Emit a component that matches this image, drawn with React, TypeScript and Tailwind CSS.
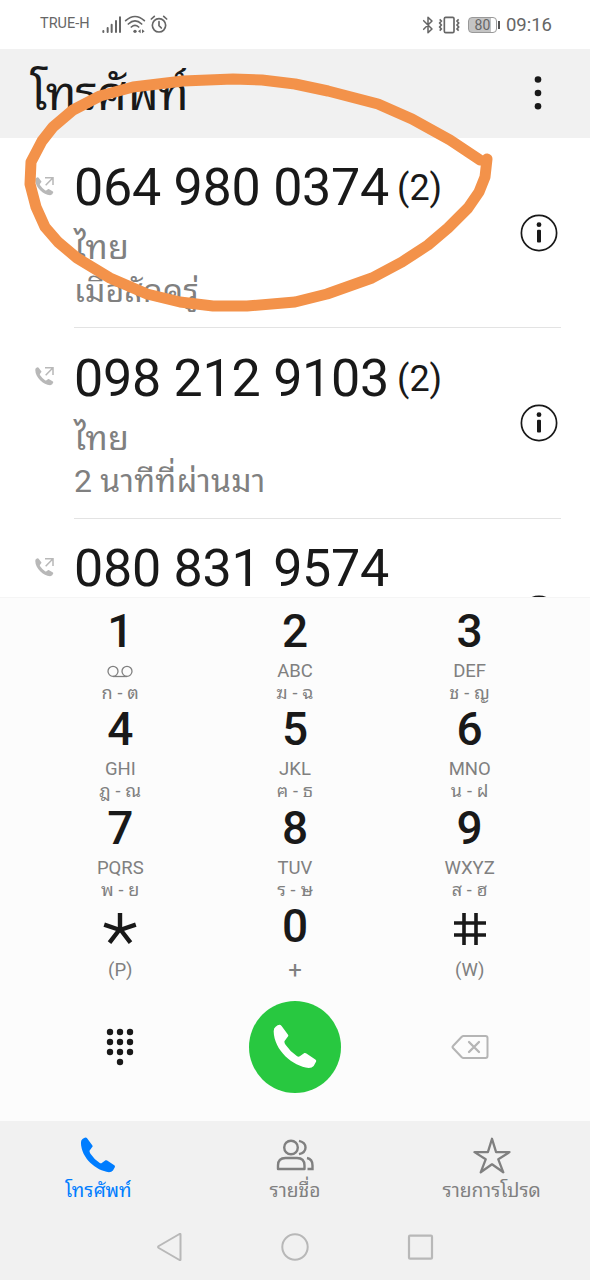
import type { ReactNode } from "react";

interface Call {
  number: string;
  count?: number;
  place?: string;
  time?: string;
}

interface DialKey {
  key: ReactNode;
  latin: ReactNode;
  thai?: string;
}

const calls: Call[] = [
  { number: "064 980 0374", count: 2, place: "ไทย", time: "เมื่อสักครู่" },
  { number: "098 212 9103", count: 2, place: "ไทย", time: "2 นาทีที่ผ่านมา" },
  { number: "080 831 9574" },
];

const HANDSET =
  "M14 4Q21-1 26 6L46 33Q47 36 44 39L35 51Q33 55 38 63Q52 84 72 97Q77 101 82 97L95 88Q98 87 101 89L128 107Q132 110 130 114L123 127Q118 133 108 133C60 128 3 80 2 22Q2 12 8 8Z";

function Handset({ className }: { className: string }) {
  return (
    <svg viewBox="0 0 133 136" className={className} fill="currentColor">
      <path d={HANDSET} />
    </svg>
  );
}

function StatusBar() {
  return (
    <div className="flex h-[49px] items-center justify-between pl-[40px] pr-[38px] text-[#666]">
      <div className="flex items-center">
        <span className="w-[62px] text-[14.5px] leading-[20px] pb-[2px]">TRUE-H</span>
        <svg width="20" height="19" viewBox="0 0 60 57" stroke="currentColor" strokeWidth="6" strokeLinecap="round">
          <path d="M4 51v-3M17 51V39M29 51V29M42 51V18M54 51V7" />
        </svg>
        <svg width="22" height="19" viewBox="0 0 66 57" className="ml-[2px]" fill="none" stroke="currentColor" strokeWidth="5" strokeLinecap="round">
          <path d="M5 17Q33-8 61 17M13 27Q33 8 53 27M22 36Q33 26 44 36" />
          <circle cx="33" cy="49" r="5" fill="currentColor" stroke="none" />
          <path d="M50 43v12l-8-6zM54 43v12l8-6z" fill="currentColor" stroke="none" />
        </svg>
        <svg width="18" height="19" viewBox="0 0 54 57" className="ml-[4px]" fill="none" stroke="currentColor" strokeWidth="5" strokeLinecap="round">
          <circle cx="27" cy="31" r="20" />
          <path d="M27 20v12l7 7M4 12l9-8M50 12l-9-8" />
        </svg>
      </div>
      <div className="flex items-center">
        <svg width="12" height="18" viewBox="0 0 36 54" fill="none" stroke="currentColor" strokeWidth="4.5" strokeLinejoin="round" strokeLinecap="round">
          <path d="M5 14l25 25-12 11V4l12 11L5 40" />
        </svg>
        <svg width="23" height="18" viewBox="0 0 69 54" className="ml-[4px]" fill="none" stroke="currentColor" strokeWidth="5">
          <rect x="19" y="4" width="29" height="46" rx="4" strokeWidth="5" />
          <path d="M5 10l5 5-5 6 5 6-5 6 5 6-5 5M62 10l-5 5 5 6-5 6 5 6-5 6 5 5" />
        </svg>
        <div className="ml-[7px] flex h-[16px] w-[29px] items-center justify-center rounded-[4px] border border-[#999] bg-[linear-gradient(90deg,#c4c4c4_80%,#fff_80%)] text-[14px] leading-none">
          80
        </div>
        <div className="ml-[1px] h-[8px] w-[2px] bg-[#555]" />
        <span className="ml-[6px] text-[18.5px] leading-[24px] pt-[1px]">09:16</span>
      </div>
    </div>
  );
}

function CallRow({ call }: { call: Call }) {
  return (
    <div className="flex h-[190.5px] shrink-0 pl-[34px] pr-[29px]">
      <svg width="21" height="20" viewBox="0 0 63 60" className="mt-[38px] text-[#b8b8b8]">
        <path d={HANDSET} fill="currentColor" transform="translate(3 3) scale(.42 .41)" />
        <path d="M33 5h24v22M57 5L35 28" fill="none" stroke="currentColor" strokeWidth="4.5" />
      </svg>
      <div className="ml-[19px] flex flex-1 justify-between border-b border-[#e3e3e3]">
        <div className="pt-[20.5px]">
          <div className="flex h-[60px] text-[52px] leading-[60px] text-[#191919]">
            <span className="whitespace-nowrap tracking-[-0.25px]">{call.number}</span>
            {call.count && <span className="ml-[8px] text-[36px] leading-[60px]">({call.count})</span>}
          </div>
          <div className="mt-[8px] text-[32px] leading-[43.5px] tracking-[0.2px] text-[#808080]">
            <div className="text-[34px]">{call.place}</div>
            <div>{call.time}</div>
          </div>
        </div>
        <svg width="38" height="38" viewBox="0 0 38 38" className="mr-[3px] mt-[76.4px]">
          <circle cx="19" cy="19" r="17.6" fill="none" stroke="#191919" strokeWidth="1.7" />
          <circle cx="19" cy="10.7" r="2.4" fill="#191919" />
          <rect x="17" y="15.8" width="4" height="12.6" rx="1" fill="#191919" />
        </svg>
      </div>
    </div>
  );
}

const keys: DialKey[] = [
  {
    key: "1",
    latin: (
      <svg width="26" height="13" viewBox="0 0 26 13" fill="none" stroke="currentColor" strokeWidth="1.3">
        <circle cx="6" cy="6.3" r="5" />
        <circle cx="20" cy="6.3" r="5" />
        <path d="M6 11.5h14" />
      </svg>
    ),
    thai: "ก - ต",
  },
  { key: "2", latin: "ABC", thai: "ฆ - ฉ" },
  { key: "3", latin: "DEF", thai: "ช - ญ" },
  { key: "4", latin: "GHI", thai: "ฎ - ณ" },
  { key: "5", latin: "JKL", thai: "ฅ - ธ" },
  { key: "6", latin: "MNO", thai: "น - ฝ" },
  { key: "7", latin: "PQRS", thai: "พ - ย" },
  { key: "8", latin: "TUV", thai: "ร - ษ" },
  { key: "9", latin: "WXYZ", thai: "ส - ฮ" },
  {
    key: (
      <svg width="34" height="34" viewBox="0 0 34 34" className="mt-[5px]" stroke="currentColor" strokeWidth="4.4">
        <path d="M17 1v17M1.2 12.6L17 18M32.8 12.6L17 18M6.5 30.7L17 17M27.5 30.7L17 17" />
      </svg>
    ),
    latin: "(P)",
  },
  { key: "0", latin: <span className="text-[24px]">+</span> },
  {
    key: (
      <svg width="32" height="34" viewBox="0 0 32 34" className="mt-[5px]" stroke="currentColor" strokeWidth="3.6">
        <path d="M10 1v32M22 1v32M0 11h32M0 23h32" />
      </svg>
    ),
    latin: "(W)",
  },
];

function Keypad() {
  return (
    <div className="grid grid-cols-3 px-[33px]">
      {keys.map((k, i) => (
        <div key={i} className="flex h-[98.4px] flex-col items-center">
          <div className="flex h-[48px] items-center text-[46px] font-medium leading-[48px] text-[#191919]">
            {k.key}
          </div>
          <div
            className={
              k.thai
                ? "mt-[5px] flex h-[22px] items-center text-[18.5px] leading-[22px] text-[#808080]"
                : "mt-[8.5px] flex h-[22px] items-center text-[18.5px] leading-[22px] text-[#808080]"
            }
          >
            {k.latin}
          </div>
          {k.thai && <div className="text-[18px] leading-[22px] tracking-[0.2px] text-[#808080]">{k.thai}</div>}
        </div>
      ))}
    </div>
  );
}

const dots = [0, 1, 2, 3, 4, 5, 6, 7, 8, 10];

function DialActions() {
  return (
    <div className="grid grid-cols-3 items-center justify-items-center px-[33px]">
      <svg width="28" height="38" viewBox="0 0 28 38" fill="#191919">
        {dots.map((d) => (
          <circle key={d} cx={4 + (d % 3) * 10} cy={4 + Math.floor(d / 3) * 10} r="3.2" />
        ))}
      </svg>
      <div className="flex h-[92px] w-[92px] items-center justify-center rounded-full bg-[#28c840]">
        <Handset className="h-[45px] w-[44px] text-white" />
      </div>
      <svg width="38" height="26" viewBox="0 0 38 26" className="ml-[1px]" fill="none" stroke="#b5b5b5" strokeWidth="2" strokeLinejoin="round" strokeLinecap="round">
        <path d="M12.5 2h22q2 0 2 2v18q0 2-2 2h-22q-1 0-2-1l-8.5-9q-1-1 0-2l8.5-9q1-1 2-1z" />
        <path d="M18 8l10 10M28 8L18 18" strokeWidth="2.3" />
      </svg>
    </div>
  );
}

function Tab({ icon, label, active }: { icon: ReactNode; label: string; active?: boolean }) {
  return (
    <div className={active ? "flex flex-col items-center text-[#007dff]" : "flex flex-col items-center text-[#808080]"}>
      <div className="flex h-[38px] items-center">{icon}</div>
      <div className="mt-[3px] whitespace-nowrap text-[19.2px] leading-[28px]">{label}</div>
    </div>
  );
}

function BottomTabs() {
  return (
    <div className="grid h-[93px] grid-cols-3 pt-[15px]">
      <Tab active label="โทรศัพท์" icon={<Handset className="h-[36px] w-[36px]" />} />
      <Tab
        label="รายชื่อ"
        icon={
          <svg width="38" height="32" viewBox="0 0 38 32" fill="none" stroke="currentColor" strokeWidth="2.4">
            <circle cx="15" cy="8.5" r="6.8" />
            <path d="M2 30v-3.5q0-7.5 7.5-7.5h11.5q7.5 0 7.5 7.5V30z" strokeLinejoin="round" />
            <path d="M23 1.8q6.5 1.5 6.5 6.7t-6.5 6.7M31 19q5.5 1 5.5 7.5V30h-5" />
          </svg>
        }
      />
      <Tab
        label="รายการโปรด"
        icon={
          <svg width="38" height="37" viewBox="0 0 38 37" fill="none" stroke="currentColor" strokeWidth="2.3" strokeLinejoin="round">
            <path d="M19 1.8l4.1 13.3H36.5L25.3 22.3 30.3 35.3 19 27.3 7.7 35.3 12.7 22.3 1.5 15.1H14.9z" />
          </svg>
        }
      />
    </div>
  );
}

function NavBar() {
  return (
    <div className="flex h-[66px] items-center justify-center gap-[97px] pr-[1px]">
      <svg width="28" height="28" viewBox="0 0 28 28" fill="none" stroke="#b8b8b8" strokeWidth="2" strokeLinejoin="round">
        <path d="M24.5 1.5v25q0 1-1 .5L2.8 15q-1.5-1 0-2L23.5 1q1-.5 1 .5z" />
      </svg>
      <svg width="28" height="28" viewBox="0 0 28 28" fill="none" stroke="#b8b8b8" strokeWidth="2">
        <circle cx="14" cy="14" r="12.7" />
      </svg>
      <svg width="28" height="28" viewBox="0 0 28 28" fill="none" stroke="#b8b8b8" strokeWidth="2.2">
        <rect x="3" y="2.7" width="23" height="23" rx="1" />
      </svg>
    </div>
  );
}

export default function App() {
  return (
    <div className="relative flex h-[1280px] w-[590px] flex-col overflow-hidden bg-white font-[Roboto,'Noto_Sans_Thai_Looped','Noto_Looped_Thai','Droid_Sans_Thai',Loma,Waree,Garuda,Umpush,'Tlwg_Typo',sans-serif]">
      <StatusBar />
      <div className="flex h-[88.5px] items-center justify-between bg-[#f1f1f1] pl-[30px] pr-[48px] text-[#191919]">
        <h1 className="pt-[2px] text-[47px] leading-[60px] tracking-[-0.9px]">โทรศัพท์</h1>
        <svg width="8" height="36" viewBox="0 0 8 36" fill="currentColor">
          <circle cx="4" cy="4.5" r="3.3" />
          <circle cx="4" cy="18" r="3.3" />
          <circle cx="4" cy="31.3" r="3.3" />
        </svg>
      </div>
      <div className="flex h-[459.5px] flex-col overflow-hidden">
        {calls.map((call) => (
          <CallRow key={call.number} call={call} />
        ))}
      </div>
      <div className="h-[524px] border-t border-[#f5f5f5] bg-[#fcfcfc] pt-[9px]">
        <Keypad />
        <DialActions />
      </div>
      <div className="flex-1 bg-[#f1f1f1]">
        <BottomTabs />
        <NavBar />
      </div>
      {/* hand-drawn marker around the latest call */}
      <svg className="pointer-events-none absolute left-0 top-0" width="590" height="330" viewBox="0 0 590 330" fill="none">
        <polyline
          points="480,160 450,140 412,119 378,104 328,91 295,84 262,80 233,79 183,81 133,87 100,96 73,110 53,127 42,141 31,162 30,184 36,207 45,227 58,242 77,258 110,278 147,294 180,302 213,306 247,306 295,302 327,294 372,278 402,262 428,245 448,228 468,208 479,192 485,177 487,159"
          stroke="#f3924a"
          strokeWidth="11"
          strokeLinejoin="round"
          strokeLinecap="round"
        />
      </svg>
    </div>
  );
}
